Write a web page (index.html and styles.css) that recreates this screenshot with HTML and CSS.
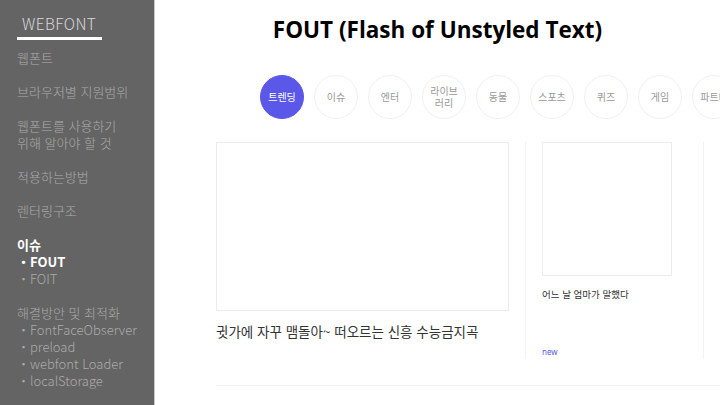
FILE: index.html
```html
<!DOCTYPE html>
<html lang="ko">
<head>
<meta charset="utf-8">
<link rel="stylesheet" href="styles.css">
</head>
<body>
<div class="page">
  <aside class="side">
    <div class="brand">WEBFONT</div>
    <ul class="menu">
      <li class="grp">웹폰트</li>
      <li class="grp">브라우저별 지원범위</li>
      <li class="grp">웹폰트를 사용하기<br>위해 알아야 할 것</li>
      <li class="grp">적용하는방법</li>
      <li class="grp">렌터링구조</li>
      <li class="grp">
        <div class="on">이슈</div>
        <div class="on">・FOUT</div>
        <div>・FOIT</div>
      </li>
      <li class="grp">
        <div>해결방안 및 최적화</div>
        <div>・FontFaceObserver</div>
        <div>・preload</div>
        <div>・webfont Loader</div>
        <div>・localStorage</div>
      </li>
    </ul>
  </aside>
  <main class="main">
    <h1 class="title">FOUT (Flash of Unstyled Text)</h1>
    <div class="cats">
      <div class="cat active">트렌딩</div>
      <div class="cat">이슈</div>
      <div class="cat">엔터</div>
      <div class="cat two">라이브<br>러리</div>
      <div class="cat">동물</div>
      <div class="cat">스포츠</div>
      <div class="cat">퀴즈</div>
      <div class="cat">게임</div>
      <div class="cat">파트너</div>
    </div>
    <div class="cards">
      <div class="card big">
        <div class="thumb"></div>
        <p class="cap">귓가에 자꾸 맴돌아~ 떠오르는 신흥 수능금지곡</p>
      </div>
      <div class="card small">
        <div class="thumb"></div>
        <p class="cap">어느 날 엄마가 말했다</p>
        <span class="meta new">new</span>
      </div>
      <div class="card small">
        <div class="thumb"></div>
        <p class="cap">저녁식사 메뉴</p>
        <span class="meta">1,147</span>
      </div>
    </div>
    <div class="rule"></div>
  </main>
</div>
</body>
</html>
```

FILE: styles.css
```css
* { box-sizing: border-box; }
html, body { margin: 0; padding: 0; }
body {
  width: 720px;
  height: 405px;
  overflow: hidden;
  background: #fff;
  font-family: "Noto Sans CJK KR", "Noto Sans", sans-serif;
}
.page {
  display: flex;
  height: 405px;
}
.side {
  width: 155px;
  flex: none;
  background: #646464;
  border-right: 1px solid #c9c9c9;
  padding: 11px 0 0 17px;
}
.brand {
  display: inline-block;
  width: 85px;
  padding: 0 0 3px 5px;
  border-bottom: 3px solid #ffffff;
  color: #d8d8d8;
  font-family: "Noto Sans CJK KR", sans-serif;
  font-weight: 300;
  font-size: 15.5px;
  line-height: 22px;
  letter-spacing: 0.4px;
}
.menu {
  list-style: none;
  margin: 9px 0 0;
  padding: 0;
  color: #ababab;
  font-size: 13px;
  font-weight: 300;
  line-height: 17px;
}
.grp { margin-bottom: 17px; }
.on { color: #fff; font-weight: 700; }
.main {
  flex: 1;
  min-width: 0;
  overflow: hidden;
}
.title {
  margin: 14px 0 0;
  text-align: center;
  font-family: "Open Sans", sans-serif;
  font-weight: 700;
  font-size: 22.5px;
  line-height: 32px;
  color: #000;
  letter-spacing: 0;
}
.cats {
  display: flex;
  gap: 10px;
  margin: 29px 0 0 105px;
}
.cat {
  flex: none;
  width: 44px;
  height: 44px;
  border-radius: 50%;
  border: 1px solid #f1f1f1;
  display: flex;
  align-items: center;
  justify-content: center;
  text-align: center;
  font-size: 10px;
  line-height: 12px;
  color: #9a9a9a;
}
.cat.active {
  background: #5b57e8;
  border-color: #5b57e8;
  color: #fff;
}
.cards {
  display: flex;
  margin: 23px 0 0 61px;
}
.card { flex: none; }
.big { width: 293px; }
.big .thumb {
  height: 169px;
  border: 1px solid #ececec;
}
.big .cap {
  margin: 11px 0 0;
  font-size: 13.5px;
  line-height: 18px;
  color: #333;
}
.small {
  width: 162px;
  margin-left: 16px;
  padding: 0 16px;
  border-left: 1px solid #f3f3f3;
  height: 217px;
  display: flex;
  flex-direction: column;
}
.small .thumb {
  width: 130px;
  height: 134px;
  border: 1px solid #ececec;
  flex: none;
}
.small .cap {
  margin: 11px 0 0;
  font-size: 9.5px;
  line-height: 14px;
  color: #333;
  white-space: nowrap;
}
.meta {
  margin-top: auto;
  margin-bottom: 2px;
  font-family: "Noto Sans", sans-serif;
  font-size: 8px;
  line-height: 10px;
  color: #999;
}
.meta.new { color: #5b57e8; }
.rule {
  margin: 26px 0 0 61px;
  border-top: 1px solid #f0f0f0;
}
```
